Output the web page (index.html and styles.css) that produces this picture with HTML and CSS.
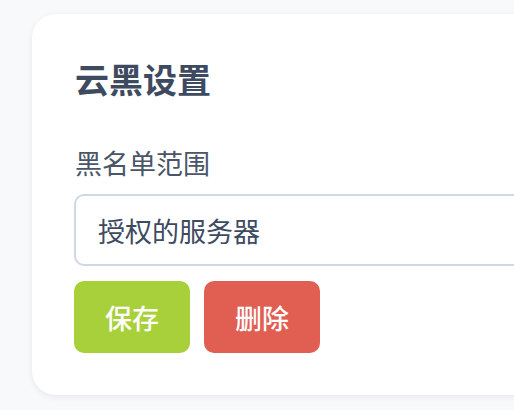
FILE: index.html
```html
<!DOCTYPE html>
<html lang="zh-CN">
<head>
<meta charset="utf-8">
<link rel="stylesheet" href="styles.css">
</head>
<body>
<div class="card">
  <h2 class="title">云黑设置</h2>
  <label class="label">黑名单范围</label>
  <div class="select">授权的服务器</div>
  <div class="actions">
    <button class="btn btn-save">保存</button>
    <button class="btn btn-delete">删除</button>
  </div>
</div>
</body>
</html>
```

FILE: styles.css
```css
html, body {
  margin: 0;
  padding: 0;
  background: #f8f9fb;
  overflow: hidden;
}
body {
  width: 514px;
  height: 410px;
  padding: 14px 0 0 32px;
  box-sizing: border-box;
  font-family: "Noto Sans CJK SC", "Noto Sans", sans-serif;
}
.card {
  width: 620px;
  box-sizing: border-box;
  background: #ffffff;
  border-radius: 24px;
  box-shadow: 0 2px 6px rgba(30, 41, 59, 0.08);
  padding: 40px 42px 42px 42px;
  display: flex;
  flex-direction: column;
}
.title {
  margin: 0 0 0 1px;
  font-size: 34px;
  line-height: 50px;
  font-weight: 600;
  color: #3d4a5f;
}
.label {
  margin: 40px 0 0 1px;
  font-size: 27px;
  line-height: 38px;
  color: #4a5568;
}
.select {
  margin-top: 12px;
  height: 72px;
  box-sizing: border-box;
  border: 2px solid #cfd8e3;
  border-radius: 10px;
  padding: 0 22px;
  display: flex;
  align-items: center;
  font-size: 27px;
  color: #3d4a5f;
}
.actions {
  margin-top: 15px;
  display: flex;
  gap: 14px;
}
.btn {
  width: 116px;
  height: 72px;
  border: none;
  border-radius: 10px;
  font-family: inherit;
  font-size: 27px;
  font-weight: 500;
  color: #ffffff;
  padding: 0;
}
.btn-save { background: #a8d03b; }
.btn-delete { background: #e15e53; }
```
